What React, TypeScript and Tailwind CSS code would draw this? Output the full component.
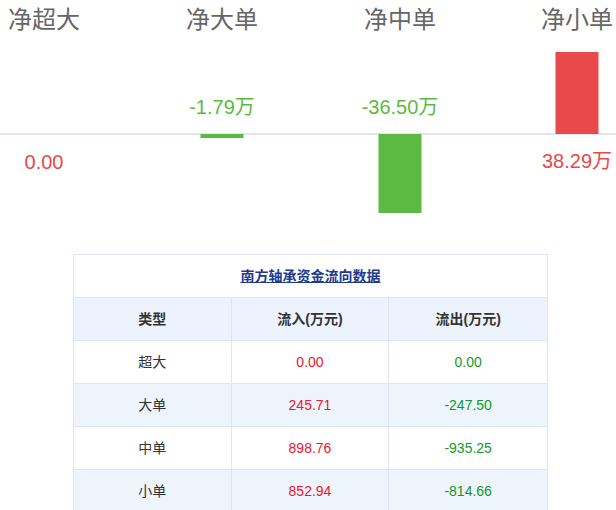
import React from 'react';

const font = { fontFamily: '"Liberation Sans", "Noto Sans CJK SC", sans-serif' };

interface Bar {
  name: string;
  value: string;
  cx: number;
  top: number;
  height: number;
  up: boolean;
}

const bars: Bar[] = [
  { name: '净超大', value: '0.00', cx: 44, top: 134, height: 0, up: false },
  { name: '净大单', value: '-1.79万', cx: 222, top: 134, height: 4, up: false },
  { name: '净中单', value: '-36.50万', cx: 400, top: 134, height: 79, up: false },
  { name: '净小单', value: '38.29万', cx: 577, top: 52, height: 82, up: true },
];

const rows = [
  { type: '超大', inflow: '0.00', outflow: '0.00' },
  { type: '大单', inflow: '245.71', outflow: '-247.50' },
  { type: '中单', inflow: '898.76', outflow: '-935.25' },
  { type: '小单', inflow: '852.94', outflow: '-814.66' },
];

function Chart() {
  return (
    <div className="relative h-[230px] w-[616px] overflow-hidden">
      <div className="absolute left-0 right-0 top-[133px] h-[2px] bg-[#e0e6f1]" />
      {bars.map((b) => {
        const isRed = b.value.startsWith('-') === false && b.value !== '0.00';
        const labelTop = b.name === '净超大' ? 149 : b.up ? 148 : 94;
        return (
          <React.Fragment key={b.name}>
            <div
              className="absolute top-[4px] w-[120px] -translate-x-1/2 text-center text-[24px] leading-[32px] text-[#666]"
              style={{ left: b.cx }}
            >
              {b.name}
            </div>
            {b.height > 0 && (
              <div
                className={`absolute w-[43px] -translate-x-1/2 ${b.up ? 'bg-[#e8494a]' : 'bg-[#5cba42]'}`}
                style={{ left: b.cx, top: b.top, height: b.height }}
              />
            )}
            <div
              className={`absolute w-[140px] -translate-x-1/2 text-center text-[20px] leading-[26px] ${
                b.value.startsWith('-') ? 'text-[#5cba42]' : 'text-[#e8494a]'
              }`}
              style={{ left: b.cx, top: labelTop }}
              data-red={isRed}
            >
              {b.value}
            </div>
          </React.Fragment>
        );
      })}
    </div>
  );
}

export default function App() {
  return (
    <div className="h-[510px] w-[616px] overflow-hidden bg-white" style={font}>
      <Chart />
      <div className="ml-[73px] mt-[24px] w-[475px] border border-[#dde6f7] text-[14px]">
        <div className="flex h-[43px] items-center justify-center border-b border-[#dde6f7]">
          <span className="font-bold text-[#1e3a8f] underline">南方轴承资金流向数据</span>
        </div>
        <div className="grid h-[43px] grid-cols-3 border-b border-[#dde6f7] bg-[#edf3fc] font-bold text-[#333]">
          <div className="flex items-center justify-center border-r border-[#dde6f7]">类型</div>
          <div className="flex items-center justify-center border-r border-[#dde6f7]">流入(万元)</div>
          <div className="flex items-center justify-center">流出(万元)</div>
        </div>
        {rows.map((r, i) => (
          <div
            key={r.type}
            className={`grid h-[43px] grid-cols-3 border-b border-[#dde6f7] ${i % 2 === 1 ? 'bg-[#edf4fc]' : 'bg-white'}`}
          >
            <div className="flex items-center justify-center border-r border-[#dde6f7] text-[#333]">{r.type}</div>
            <div className="flex items-center justify-center border-r border-[#dde6f7] text-[#f0142d]">{r.inflow}</div>
            <div className="flex items-center justify-center text-[#14991f]">{r.outflow}</div>
          </div>
        ))}
      </div>
    </div>
  );
}
